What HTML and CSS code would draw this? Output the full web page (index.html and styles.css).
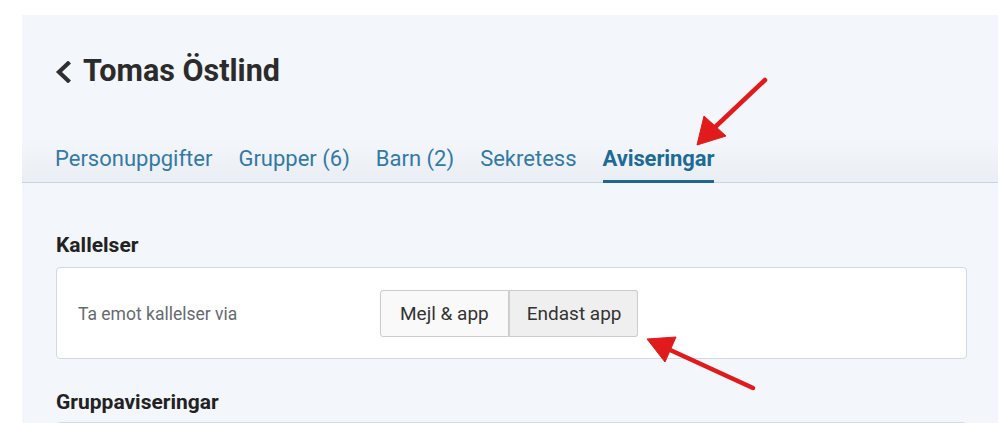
FILE: index.html
```html
<!DOCTYPE html>
<html lang="sv">
<head>
<meta charset="utf-8">
<title>Tomas Östlind</title>
<link rel="stylesheet" href="styles.css">
</head>
<body>
<div class="frame">
  <header class="head">
    <h1 class="title">
      <svg class="back" width="16" height="22" viewBox="0 0 16 22"><path d="M13 2.5 L4 11 L13 19.5" fill="none" stroke="#2f2f2f" stroke-width="4.2" stroke-linecap="square"/></svg>
      <span>Tomas Östlind</span>
    </h1>
    <nav class="tabs">
      <a class="tab">Personuppgifter</a>
      <a class="tab">Grupper (6)</a>
      <a class="tab">Barn (2)</a>
      <a class="tab">Sekretess</a>
      <a class="tab active">Aviseringar</a>
    </nav>
  </header>
  <main class="content">
    <h2 class="section">Kallelser</h2>
    <div class="card">
      <div class="label">Ta emot kallelser via</div>
      <div class="btn-group">
        <button class="btn">Mejl &amp; app</button>
        <button class="btn on">Endast app</button>
      </div>
    </div>
    <h2 class="section second">Gruppaviseringar</h2>
    <div class="card tall"></div>
  </main>
  <svg class="arrows" width="1000" height="423" viewBox="0 0 1000 423">
    <g fill="#e11b1b" stroke="#e11b1b">
      <line x1="765" y1="80" x2="712" y2="130" stroke-width="4.5" stroke-linecap="round"/>
      <polygon points="697,145 704,116 726,136" stroke-width="1" stroke-linejoin="round"/>
      <line x1="753" y1="388" x2="668" y2="349" stroke-width="4.5" stroke-linecap="round"/>
      <polygon points="647,339 676,337 665,362" stroke-width="1" stroke-linejoin="round"/>
    </g>
  </svg>
</div>
</body>
</html>
```

FILE: styles.css
```css
html, body {
  margin: 0;
  padding: 0;
  background: #ffffff;
  height: 100%;
  overflow: hidden;
}
body {
  font-family: Roboto, "Liberation Sans", Arial, sans-serif;
}
.frame {
  margin: 15px 2px 0 22px;
  background: #f3f6fa;
  height: 420px;
  overflow: hidden;
}
.head {
  padding: 38px 0 0 33px;
  border-bottom: 1px solid #c9d4df;
  background: linear-gradient(to bottom, rgba(232,237,243,0) 0, rgba(232,237,243,0) 125px, #e9eef4 168px);
}
.title {
  margin: 0;
  display: flex;
  align-items: center;
  gap: 12px;
  font-size: 30.5px;
  line-height: 36px;
  font-weight: 700;
  color: #2b2b2b;
}
.back {
  display: block;
  margin-top: 1px;
}
.tabs {
  display: flex;
  gap: 26px;
  margin-top: 58px;
  margin-bottom: -1px;
}
.tab {
  font-size: 22px;
  line-height: 24px;
  color: #3479a6;
  padding-bottom: 9px;
  border-bottom: 3px solid transparent;
  cursor: pointer;
}
.tab.active {
  color: #1e6a97;
  font-weight: 700;
  border-bottom-color: #1f6793;
  letter-spacing: -0.1px;
}
.content {
  padding: 50px 31px 0 34px;
}
.section {
  margin: 0 0 10px;
  font-size: 21px;
  line-height: 24px;
  font-weight: 700;
  color: #222222;
}
.section.second {
  margin-top: 31px;
  margin-bottom: 8px;
}
.card {
  background: #ffffff;
  border: 1px solid #d3d9e1;
  border-radius: 4px;
  padding: 22px 21px 21px;
  display: grid;
  grid-template-columns: 302px auto;
  align-items: center;
  justify-content: start;
}
.card.tall {
  height: 80px;
}
.label {
  font-size: 17.5px;
  color: #666a6e;
}
.btn-group {
  display: flex;
}
.btn {
  font-family: Roboto, "Liberation Sans", Arial, sans-serif;
  font-size: 19px;
  line-height: 22px;
  color: #333333;
  background: #f9f9f9;
  border: 1px solid #cccccc;
  padding: 12px 19px 11px;
  margin: 0;
}
.btn:first-child {
  border-radius: 3px 0 0 3px;
}
.btn + .btn {
  border-left: none;
  box-shadow: inset 1px 0 0 #d0d0d0;
}
.btn.on {
  background: #efefef;
  border-radius: 0 3px 3px 0;
  padding-right: 15px;
  padding-left: 18px;
}
.arrows {
  position: absolute;
  left: 0;
  top: 0;
  pointer-events: none;
}
```
